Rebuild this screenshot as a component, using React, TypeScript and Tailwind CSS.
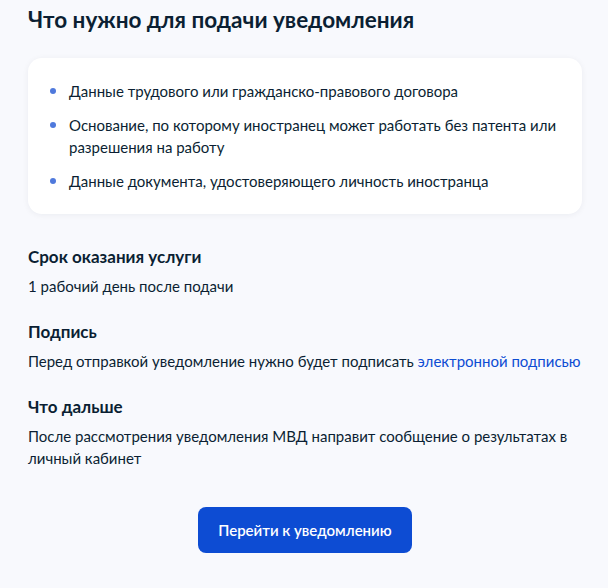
const requirements = [
  "Данные трудового или гражданско-правового договора",
  "Основание, по которому иностранец может работать без патента или разрешения на работу",
  "Данные документа, удостоверяющего личность иностранца",
];

function Section({ title, children }: { title: string; children: React.ReactNode }) {
  return (
    <div className="flex flex-col gap-[8px]">
      <h3 className="text-[17px] font-bold leading-[21px] text-[#0b1f33]">{title}</h3>
      <p className="text-[15px] leading-[22px] text-[#0b1f33]">{children}</p>
    </div>
  );
}

export default function App() {
  return (
    <div
      className="min-h-[588px] w-[608px] bg-[#f8f9fd] pl-[28px] pr-[14px] pt-[6px]"
      style={{ fontFamily: "Lato, 'Noto Sans', sans-serif" }}
    >
      <h2 className="text-[22.5px] font-bold leading-[28px] text-[#0b1f33]">
        Что нужно для подачи уведомления
      </h2>

      <div className="mt-[24px] w-[554px] rounded-[14px] bg-white py-[22px] pl-[22px] pr-[20px] shadow-[0_1px_6px_rgba(11,31,51,0.06)]">
        <ul className="flex flex-col gap-[12px]">
          {requirements.map((item) => (
            <li key={item} className="flex items-start gap-[13px] text-[15px] leading-[22px] text-[#0b1f33]">
              <span className="mt-[8px] h-[6px] w-[6px] shrink-0 rounded-full bg-[#4f79dc]" />
              <span>{item}</span>
            </li>
          ))}
        </ul>
      </div>

      <div className="mt-[32px] flex w-[560px] flex-col gap-[24px]">
        <Section title="Срок оказания услуги">1 рабочий день после подачи</Section>
        <Section title="Подпись">
          Перед отправкой уведомление нужно будет подписать{" "}
          <a href="#" className="text-[#0d4cd3]">
            электронной подписью
          </a>
        </Section>
        <Section title="Что дальше">
          <span className="block w-[540px]">
            После рассмотрения уведомления МВД направит сообщение о результатах в личный кабинет
          </span>
        </Section>
      </div>

      <div className="mt-[38px] flex w-[554px] justify-center">
        <button
          type="button"
          className="h-[46px] w-[214px] rounded-[8px] bg-[#0d4cd3] text-[15px] font-semibold text-white"
        >
          Перейти к уведомлению
        </button>
      </div>
    </div>
  );
}
